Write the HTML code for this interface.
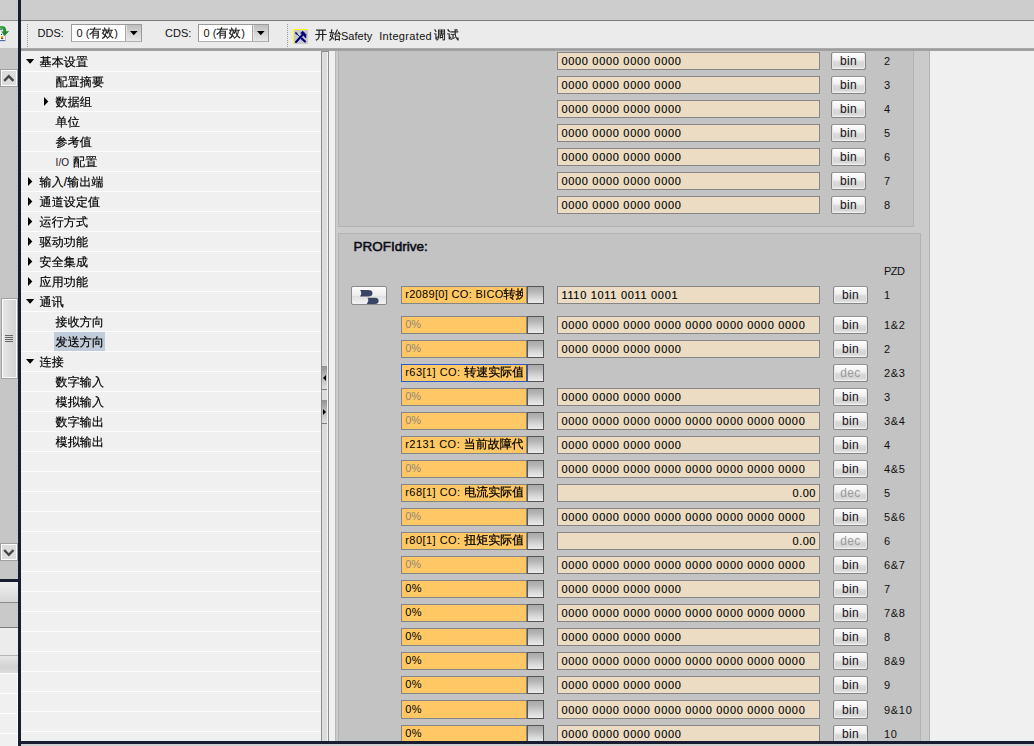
<!DOCTYPE html>
<html lang="zh-CN"><head><meta charset="utf-8"><title>PROFIdrive</title>
<style>
*{box-sizing:border-box;margin:0;padding:0}
html,body{width:1034px;height:746px;overflow:hidden;background:#c3c3c3}
body{position:relative;font-family:"Liberation Sans","WenQuanYi Zen Hei",sans-serif;font-size:11px;color:#101010}
.a{position:absolute}
.t{position:absolute;white-space:nowrap;line-height:20px;height:20px}
.cj{font-size:12px;-webkit-text-stroke:.2px #000}
/* tree */
#tree{left:21px;top:51px;width:300px;height:691px;background:#f0f0f0;
 background-image:repeating-linear-gradient(to bottom,#f0f0f0 0,#f0f0f0 19px,#fdfdfd 19px,#fdfdfd 20px);background-position:0 1px}
.ti{position:absolute;left:0;height:20px;line-height:20px;margin-top:1px;font-size:12px;white-space:nowrap;color:#000;-webkit-text-stroke:.2px #000;letter-spacing:.15px}
.ar{position:absolute;width:0;height:0}
.ar.r{border-left:4px solid #000;border-top:4.5px solid transparent;border-bottom:4.5px solid transparent}
.ar.d{border-top:4px solid #000;border-left:4px solid transparent;border-right:4px solid transparent}
/* fields */
.bf{position:absolute;left:557px;width:263px;height:18px;background:#ebdcc3;border:1px solid #868686;
 font-size:11px;line-height:16px;padding-left:3.4px;letter-spacing:.69px;white-space:nowrap;overflow:hidden;color:#000;-webkit-text-stroke:.12px #000}
.bf.r{text-align:right;padding-right:3px;letter-spacing:.5px}
.of{position:absolute;left:401px;width:126px;height:18px;background:#ffc864;border:1px solid #868686;
 font-size:11px;line-height:15px;padding-left:3.2px;white-space:nowrap;overflow:hidden;color:#000;letter-spacing:.32px}
.of i{display:block;font-style:normal;width:118.2px;overflow:hidden}
.of.g{color:#8f897a;letter-spacing:0}
.of.f{border-color:#2a5bd0}
.of .c{font-size:12px;letter-spacing:0;-webkit-text-stroke:.25px #000}
.sq{position:absolute;left:527px;width:17px;height:18px;border:1px solid #555;background:linear-gradient(to bottom,#aaa 0,#b4b4b4 25%,#d8d8d8 70%,#ececec 100%)}
.bb{position:absolute;width:35px;height:18px;border:1px solid #868686;border-top-color:#939393;border-radius:2.5px;
 background:linear-gradient(to bottom,#fdfdfd 0,#f2f2f2 40%,#e6e6e6 50%,#d9d9d9 56%,#d6d6d6 80%,#e8e8e8 100%);box-shadow:inset 0 1px 0 #fff,inset 0 -1px 0 #f0f0f0,inset 1px 0 0 #e6e6e6,inset -1px 0 0 #e6e6e6;
 font-size:12px;line-height:17px;text-align:center;color:#141018;letter-spacing:.35px}
.bb.dis{color:#9a9a9a}
.lb{position:absolute;left:884px;font-size:11px;line-height:18px;height:18px;white-space:nowrap;letter-spacing:.7px;color:#101010}
</style></head>
<body>
<div class="a" style="left:0;top:0;width:1034px;height:20px;background:#cdcdcd"></div>
<div class="a" style="left:0;top:20px;width:1034px;height:1px;background:#7d7d7d"></div>
<div class="a" style="left:0;top:21px;width:1034px;height:27px;background:#ebebeb"></div>
<div class="a" style="left:0;top:48px;width:1034px;height:3px;background:linear-gradient(to bottom,#b0b0b0,#9c9c9c 50%,#a4a4a4)"></div>
<div class="a" style="left:0;top:20px;width:18px;height:1px;background:#8c8c8c"></div>
<div class="a" style="left:0;top:21px;width:18px;height:27px;background:#e9e9e9"></div>
<div class="a" style="left:0;top:48px;width:18px;height:532px;background:#c6c6c6"></div>
<div class="a" style="left:329px;top:51px;width:6px;height:691px;background:#f0f0f0"></div>
<div class="a" style="left:335px;top:51px;width:595px;height:691px;background:#cbcbcb"></div>
<div class="a" style="left:930px;top:51px;width:104px;height:691px;background:#f0f0f0"></div>
<div class="a" style="left:929px;top:51px;width:1px;height:691px;background:#b2b2b2"></div>
<div class="a" style="left:338px;top:40px;width:576px;height:187px;background:#c3c3c3;border:1px solid #b2b2b2;clip-path:inset(11px 0 0 0)"></div>
<div class="a" style="left:338px;top:233px;width:583px;height:520px;background:#c3c3c3;border:1px solid #b2b2b2"></div>
<div class="a" id="tree">
<svg class="a" style="left:5px;top:7.5px" width="9" height="5" viewBox="0 0 9 5"><path d="M0 0L8.2 0L4.1 4.7Z" fill="#000"/></svg>
<span class="ti" style="left:18.5px;top:0px">基本设置</span>
<span class="ti" style="left:34.5px;top:20px">配置摘要</span>
<svg class="a" style="left:23px;top:46px" width="5" height="9" viewBox="0 0 5 9"><path d="M0 0L4.3 4.5L0 9Z" fill="#000"/></svg>
<span class="ti" style="left:34.5px;top:40px">数据组</span>
<span class="ti" style="left:34.5px;top:60px">单位</span>
<span class="ti" style="left:34.5px;top:80px">参考值</span>
<span class="ti" style="left:34.5px;top:100px"><span style="font-size:10px;-webkit-text-stroke:0;letter-spacing:.1px;margin-right:1px;color:#15101c">I/O </span>配置</span>
<svg class="a" style="left:7px;top:126px" width="5" height="9" viewBox="0 0 5 9"><path d="M0 0L4.3 4.5L0 9Z" fill="#000"/></svg>
<span class="ti" style="left:18.5px;top:120px">输入/输出端</span>
<svg class="a" style="left:7px;top:146px" width="5" height="9" viewBox="0 0 5 9"><path d="M0 0L4.3 4.5L0 9Z" fill="#000"/></svg>
<span class="ti" style="left:18.5px;top:140px">通道设定值</span>
<svg class="a" style="left:7px;top:166px" width="5" height="9" viewBox="0 0 5 9"><path d="M0 0L4.3 4.5L0 9Z" fill="#000"/></svg>
<span class="ti" style="left:18.5px;top:160px">运行方式</span>
<svg class="a" style="left:7px;top:186px" width="5" height="9" viewBox="0 0 5 9"><path d="M0 0L4.3 4.5L0 9Z" fill="#000"/></svg>
<span class="ti" style="left:18.5px;top:180px">驱动功能</span>
<svg class="a" style="left:7px;top:206px" width="5" height="9" viewBox="0 0 5 9"><path d="M0 0L4.3 4.5L0 9Z" fill="#000"/></svg>
<span class="ti" style="left:18.5px;top:200px">安全集成</span>
<svg class="a" style="left:7px;top:226px" width="5" height="9" viewBox="0 0 5 9"><path d="M0 0L4.3 4.5L0 9Z" fill="#000"/></svg>
<span class="ti" style="left:18.5px;top:220px">应用功能</span>
<svg class="a" style="left:5px;top:247.5px" width="9" height="5" viewBox="0 0 9 5"><path d="M0 0L8.2 0L4.1 4.7Z" fill="#000"/></svg>
<span class="ti" style="left:18.5px;top:240px">通讯</span>
<span class="ti" style="left:34.5px;top:260px">接收方向</span>
<span class="a" style="left:33.0px;top:281px;width:51px;height:19px;background:#c0ccd9"></span>
<span class="ti" style="left:34.5px;top:280px">发送方向</span>
<svg class="a" style="left:5px;top:307.5px" width="9" height="5" viewBox="0 0 9 5"><path d="M0 0L8.2 0L4.1 4.7Z" fill="#000"/></svg>
<span class="ti" style="left:18.5px;top:300px">连接</span>
<span class="ti" style="left:34.5px;top:320px">数字输入</span>
<span class="ti" style="left:34.5px;top:340px">模拟输入</span>
<span class="ti" style="left:34.5px;top:360px">数字输出</span>
<span class="ti" style="left:34.5px;top:380px">模拟输出</span>
</div>
<div class="a" style="left:321px;top:51px;width:1px;height:691px;background:#8e8e8e"></div>
<div class="a" style="left:322px;top:51px;width:5px;height:691px;background:#dcdcdc"></div>
<div class="a" style="left:327px;top:51px;width:1px;height:691px;background:#f4f4f4"></div>
<div class="a" style="left:328px;top:51px;width:1px;height:691px;background:#8e8e8e"></div>
<div class="a" style="left:321px;top:51px;width:8px;height:1px;background:#8e8e8e"></div>
<div class="a" style="left:335px;top:51px;width:1px;height:691px;background:#b6b6b6"></div>
<div class="a" style="left:322px;top:366px;width:5px;height:24px;background:linear-gradient(to bottom,#909090,#b8b8b8 40%,#e0e0e0);border-bottom:1px solid #7a7a7a"></div>
<span class="ar" style="left:322.5px;top:375px;border-right:3.5px solid #000;border-top:3px solid transparent;border-bottom:3px solid transparent"></span>
<div class="a" style="left:322px;top:400px;width:5px;height:24px;background:linear-gradient(to bottom,#909090,#b8b8b8 40%,#e0e0e0);border-bottom:1px solid #7a7a7a"></div>
<span class="ar" style="left:323px;top:409px;border-left:3.5px solid #000;border-top:3px solid transparent;border-bottom:3px solid transparent"></span>
<div class="a" style="left:18px;top:0;width:3px;height:746px;background:#181d32"></div>
<div class="a" style="left:0;top:579px;width:18px;height:3px;background:#181d32"></div>
<div class="a" style="left:0;top:582px;width:18px;height:20px;background:linear-gradient(to bottom,#eeeeee,#e4e4e4 50%,#d6d6d6)"></div>
<div class="a" style="left:0;top:602px;width:18px;height:1px;background:#8c8c8c"></div>
<div class="a" style="left:0;top:603px;width:18px;height:24px;background:#c9c9c9"></div>
<div class="a" style="left:0;top:627px;width:18px;height:1px;background:#7c7c7c"></div>
<div class="a" style="left:0;top:628px;width:18px;height:27px;background:#ececec"></div>
<div class="a" style="left:0;top:655px;width:18px;height:1px;background:#b4b4b4"></div>
<div class="a" style="left:0;top:656px;width:18px;height:17px;background:linear-gradient(to bottom,#e6e6e6,#d2d2d2 65%,#dcdcdc)"></div>
<div class="a" style="left:0;top:673px;width:18px;height:73px;background:#f0f0f0;background-image:repeating-linear-gradient(to bottom,#fdfdfd 0,#fdfdfd 1px,#f0f0f0 1px,#f0f0f0 20px)"></div>
<div class="a" style="left:17px;top:673px;width:1px;height:73px;background:#fbfbfb"></div>
<div class="a" style="left:18px;top:741px;width:1016px;height:3px;background:#181d32"></div>
<div class="a" style="left:0;top:69px;width:18px;height:18px;background:#dcdcdc;border:1px solid #a0a0a0;box-shadow:inset 0 0 0 1px #fcfcfc"><svg width="16" height="16" viewBox="0 0 16 16" style="position:absolute;left:0;top:0"><polyline points="3.2,10.2 7.8,5.5 12.4,10.2" fill="none" stroke="#464646" stroke-width="2.4" transform="translate(0,.6)"/></svg></div>
<div class="a" style="left:0;top:543px;width:18px;height:18px;background:#dcdcdc;border:1px solid #a0a0a0;box-shadow:inset 0 0 0 1px #fcfcfc"><svg width="16" height="16" viewBox="0 0 16 16" style="position:absolute;left:0;top:0"><polyline points="3.2,5.4 7.85,10.2 12.5,5.4" fill="none" stroke="#464646" stroke-width="2.4" transform="translate(0,.6)"/></svg></div>
<div class="a" style="left:1px;top:298px;width:17px;height:81px;background:linear-gradient(to right,#e8e8e8,#dcdcdc 50%,#d2d2d2);border:1px solid #a2a2a2;box-shadow:inset 0 0 0 1px #fbfbfb"></div>
<div class="a" style="left:5px;top:335px;width:8px;height:1px;background:#666"></div>
<div class="a" style="left:5px;top:337px;width:8px;height:1px;background:#666"></div>
<div class="a" style="left:5px;top:339px;width:8px;height:1px;background:#666"></div>
<div class="a" style="left:5px;top:341px;width:8px;height:1px;background:#666"></div>
<svg class="a" style="left:0;top:25px" width="11" height="18" viewBox="0 0 11 18"><defs><linearGradient id="gg" x1="0" y1="0" x2="1" y2="1"><stop offset="0" stop-color="#3cb43c"/><stop offset="1" stop-color="#0e6a2e"/></linearGradient><linearGradient id="og" x1="0" y1="0" x2="0" y2="1"><stop offset="0" stop-color="#ffc020"/><stop offset="1" stop-color="#ff6a00"/></linearGradient></defs><rect x="-1" y="7" width="6" height="9" fill="#fdfdff"/><rect x="-1" y="15.2" width="6.2" height=".9" fill="#1c4a8c"/><rect x="5" y="9" width=".6" height="7" fill="#9aa6c0"/><rect x="0" y="4" width="2" height=".8" fill="#2a5aa0"/><circle cx="1.5" cy="9.4" r=".6" fill="#1a2050"/><rect x="1" y="11" width="2.2" height="2.4" fill="url(#og)"/><rect x="1" y="13.3" width="2.2" height=".8" fill="#101020"/><path d="M0 1 Q6.2 .2 6.2 5.2 L6.2 6.2 L9.2 6.2 L4.3 11 L1.2 6.4 L3.2 6.4 Q3.4 3.6 0 3.4Z" fill="url(#gg)"/></svg>
<div class="a" style="left:27px;top:24px;width:1px;height:24px;background-image:repeating-linear-gradient(to bottom,#9a9a9a 0,#9a9a9a 1px,transparent 1px,transparent 2px)"></div>
<div class="a" style="left:287px;top:24px;width:1px;height:24px;background-image:repeating-linear-gradient(to bottom,#9a9a9a 0,#9a9a9a 1px,transparent 1px,transparent 2px)"></div>
<span class="t" style="left:37.5px;top:23px">DDS:</span>
<span class="t" style="left:165px;top:23px">CDS:</span>
<div class="a" style="left:71px;top:24px;width:71px;height:18px;border:1px solid #9a9a9a;border-bottom-color:#b0b0b0;background:#fff"></div><span class="t" style="left:76.5px;top:23px">0 (<span class="cj" style="letter-spacing:.4px">有效</span>)</span><div class="a" style="left:125px;top:25px;width:16px;height:16px;border-left:1px solid #a8a8a8;box-shadow:inset 1px 0 0 #e4e4e4;background:linear-gradient(to bottom,#bebebe,#d2d2d2 45%,#e8e8e8)"></div><svg class="a" style="left:129.7px;top:31px" width="8" height="5" viewBox="0 0 8 5"><path d="M0 0L7.6 0L3.8 4.2Z" fill="#000"/></svg>
<div class="a" style="left:198px;top:24px;width:71px;height:18px;border:1px solid #9a9a9a;border-bottom-color:#b0b0b0;background:#fff"></div><span class="t" style="left:203.5px;top:23px">0 (<span class="cj" style="letter-spacing:.4px">有效</span>)</span><div class="a" style="left:252px;top:25px;width:16px;height:16px;border-left:1px solid #a8a8a8;box-shadow:inset 1px 0 0 #e4e4e4;background:linear-gradient(to bottom,#bebebe,#d2d2d2 45%,#e8e8e8)"></div><svg class="a" style="left:256.7px;top:31px" width="8" height="5" viewBox="0 0 8 5"><path d="M0 0L7.6 0L3.8 4.2Z" fill="#000"/></svg>
<svg class="a" style="left:293px;top:29px" width="15" height="15" viewBox="0 0 15 15"><rect width="15" height="15" fill="#c9c9c9"/><rect width="15" height="1" fill="#ffff00"/><rect width="1" height="15" fill="#ffff00"/><g stroke="#00007a" fill="none" stroke-linecap="round"><path d="M3 13 L9.6 5.8" stroke-width="2"/><path d="M8 3.8 L9.8 2.3 L12.9 5.5 L12.7 8.8 L11.3 7.6 L11 6.2 L9.6 5.6Z" fill="#00007a" stroke-width=".9" stroke-linejoin="round"/><path d="M2.9 4 L3.6 4.7" stroke-width="1.7"/><path d="M3.6 4.7 L6.4 7.4" stroke-width=".9"/><path d="M8.6 9.4 L12 12.5" stroke-width="2.1"/></g></svg>
<span class="t cj" style="left:315px;top:25px;letter-spacing:2px">开始</span>
<span class="t" style="left:341px;top:26px">Safety</span>
<span class="t" style="left:379.2px;top:26px;letter-spacing:.33px">Integrated</span>
<span class="t cj" style="left:434px;top:25px;letter-spacing:1px">调试</span>
<div class="bf" style="top:52px">0000 0000 0000 0000</div>
<div class="bb" style="left:831px;top:52px">bin</div>
<div class="lb" style="top:52px">2</div>
<div class="bf" style="top:76px">0000 0000 0000 0000</div>
<div class="bb" style="left:831px;top:76px">bin</div>
<div class="lb" style="top:76px">3</div>
<div class="bf" style="top:100px">0000 0000 0000 0000</div>
<div class="bb" style="left:831px;top:100px">bin</div>
<div class="lb" style="top:100px">4</div>
<div class="bf" style="top:124px">0000 0000 0000 0000</div>
<div class="bb" style="left:831px;top:124px">bin</div>
<div class="lb" style="top:124px">5</div>
<div class="bf" style="top:148px">0000 0000 0000 0000</div>
<div class="bb" style="left:831px;top:148px">bin</div>
<div class="lb" style="top:148px">6</div>
<div class="bf" style="top:172px">0000 0000 0000 0000</div>
<div class="bb" style="left:831px;top:172px">bin</div>
<div class="lb" style="top:172px">7</div>
<div class="bf" style="top:196px">0000 0000 0000 0000</div>
<div class="bb" style="left:831px;top:196px">bin</div>
<div class="lb" style="top:196px">8</div>
<span class="t" style="left:353.5px;top:237px;font-size:13.5px;color:#0c0c16;-webkit-text-stroke:.55px #0c0c16">PROFIdrive:</span>
<div class="lb" style="top:262px;letter-spacing:-.5px">PZD</div>
<div class="a" style="left:351px;top:286px;width:36px;height:19px;border:1px solid #8a8a8a;border-radius:2px;background:linear-gradient(to bottom,#fdfdfd,#ececec 50%,#e0e0e0 55%,#f4f4f4)"></div>
<svg class="a" style="left:358px;top:288px" width="24" height="17" viewBox="0 0 24 17"><path d="M2 2 L10 2 Q14.5 2 14.5 5.2 Q14.5 8.4 10 8.4 L2 8.4 Q4.5 5.2 2 2Z" fill="#3a4466"/><path d="M9.5 9.8 L17 9.8 Q20.6 9.8 20.6 12.8 Q20.6 16 17 16 L8.6 16 Q11.5 12.8 9.5 9.8Z" fill="#3a4466"/></svg>
<div class="of" style="top:286px;height:18px;line-height:15px"><i>r2089[0] CO: BICO<span class="c">转换</span></i></div>
<div class="sq" style="top:286px;height:18px"></div>
<div class="bf" style="top:286px;height:18px;line-height:16px">1110 1011 0011 0001</div>
<div class="bb" style="left:833px;top:286px;height:18px;line-height:17px">bin</div>
<div class="lb" style="top:286px;height:18px;line-height:18px">1</div>
<div class="of g" style="top:316px;height:18px;line-height:15px"><i>0%</i></div>
<div class="sq" style="top:316px;height:18px"></div>
<div class="bf" style="top:316px;height:18px;line-height:16px">0000 0000 0000 0000 0000 0000 0000 0000</div>
<div class="bb" style="left:833px;top:316px;height:18px;line-height:17px">bin</div>
<div class="lb" style="top:316px;height:18px;line-height:18px">1&amp;2</div>
<div class="of g" style="top:340px;height:18px;line-height:15px"><i>0%</i></div>
<div class="sq" style="top:340px;height:18px"></div>
<div class="bf" style="top:340px;height:18px;line-height:16px">0000 0000 0000 0000</div>
<div class="bb" style="left:833px;top:340px;height:18px;line-height:17px">bin</div>
<div class="lb" style="top:340px;height:18px;line-height:18px">2</div>
<div class="of f" style="top:364px;height:18px;line-height:15px"><i><span style="letter-spacing:.47px">r63[1] CO: </span><span class="c">转速实际值</span></i></div>
<div class="sq" style="top:364px;height:18px"></div>
<div class="bb dis" style="left:833px;top:364px;height:18px;line-height:17px">dec</div>
<div class="lb" style="top:364px;height:18px;line-height:18px">2&amp;3</div>
<div class="of g" style="top:388px;height:18px;line-height:15px"><i>0%</i></div>
<div class="sq" style="top:388px;height:18px"></div>
<div class="bf" style="top:388px;height:18px;line-height:16px">0000 0000 0000 0000</div>
<div class="bb" style="left:833px;top:388px;height:18px;line-height:17px">bin</div>
<div class="lb" style="top:388px;height:18px;line-height:18px">3</div>
<div class="of g" style="top:412px;height:18px;line-height:15px"><i>0%</i></div>
<div class="sq" style="top:412px;height:18px"></div>
<div class="bf" style="top:412px;height:18px;line-height:16px">0000 0000 0000 0000 0000 0000 0000 0000</div>
<div class="bb" style="left:833px;top:412px;height:18px;line-height:17px">bin</div>
<div class="lb" style="top:412px;height:18px;line-height:18px">3&amp;4</div>
<div class="of" style="top:436px;height:18px;line-height:15px"><i><span style="letter-spacing:.47px">r2131 CO: </span><span class="c">当前故障代</span></i></div>
<div class="sq" style="top:436px;height:18px"></div>
<div class="bf" style="top:436px;height:18px;line-height:16px">0000 0000 0000 0000</div>
<div class="bb" style="left:833px;top:436px;height:18px;line-height:17px">bin</div>
<div class="lb" style="top:436px;height:18px;line-height:18px">4</div>
<div class="of g" style="top:460px;height:18px;line-height:15px"><i>0%</i></div>
<div class="sq" style="top:460px;height:18px"></div>
<div class="bf" style="top:460px;height:18px;line-height:16px">0000 0000 0000 0000 0000 0000 0000 0000</div>
<div class="bb" style="left:833px;top:460px;height:18px;line-height:17px">bin</div>
<div class="lb" style="top:460px;height:18px;line-height:18px">4&amp;5</div>
<div class="of" style="top:484px;height:18px;line-height:15px"><i><span style="letter-spacing:.47px">r68[1] CO: </span><span class="c">电流实际值</span></i></div>
<div class="sq" style="top:484px;height:18px"></div>
<div class="bf r" style="top:484px;height:18px;line-height:16px">0.00</div>
<div class="bb dis" style="left:833px;top:484px;height:18px;line-height:17px">dec</div>
<div class="lb" style="top:484px;height:18px;line-height:18px">5</div>
<div class="of g" style="top:508px;height:18px;line-height:15px"><i>0%</i></div>
<div class="sq" style="top:508px;height:18px"></div>
<div class="bf" style="top:508px;height:18px;line-height:16px">0000 0000 0000 0000 0000 0000 0000 0000</div>
<div class="bb" style="left:833px;top:508px;height:18px;line-height:17px">bin</div>
<div class="lb" style="top:508px;height:18px;line-height:18px">5&amp;6</div>
<div class="of" style="top:532px;height:18px;line-height:15px"><i><span style="letter-spacing:.47px">r80[1] CO: </span><span class="c">扭矩实际值</span></i></div>
<div class="sq" style="top:532px;height:18px"></div>
<div class="bf r" style="top:532px;height:18px;line-height:16px">0.00</div>
<div class="bb dis" style="left:833px;top:532px;height:18px;line-height:17px">dec</div>
<div class="lb" style="top:532px;height:18px;line-height:18px">6</div>
<div class="of g" style="top:556px;height:18px;line-height:15px"><i>0%</i></div>
<div class="sq" style="top:556px;height:18px"></div>
<div class="bf" style="top:556px;height:18px;line-height:16px">0000 0000 0000 0000 0000 0000 0000 0000</div>
<div class="bb" style="left:833px;top:556px;height:18px;line-height:17px">bin</div>
<div class="lb" style="top:556px;height:18px;line-height:18px">6&amp;7</div>
<div class="of" style="top:580px;height:18px;line-height:15px"><i>0%</i></div>
<div class="sq" style="top:580px;height:18px"></div>
<div class="bf" style="top:580px;height:18px;line-height:16px">0000 0000 0000 0000</div>
<div class="bb" style="left:833px;top:580px;height:18px;line-height:17px">bin</div>
<div class="lb" style="top:580px;height:18px;line-height:18px">7</div>
<div class="of" style="top:604px;height:18px;line-height:15px"><i>0%</i></div>
<div class="sq" style="top:604px;height:18px"></div>
<div class="bf" style="top:604px;height:18px;line-height:16px">0000 0000 0000 0000 0000 0000 0000 0000</div>
<div class="bb" style="left:833px;top:604px;height:18px;line-height:17px">bin</div>
<div class="lb" style="top:604px;height:18px;line-height:18px">7&amp;8</div>
<div class="of" style="top:628px;height:18px;line-height:15px"><i>0%</i></div>
<div class="sq" style="top:628px;height:18px"></div>
<div class="bf" style="top:628px;height:18px;line-height:16px">0000 0000 0000 0000</div>
<div class="bb" style="left:833px;top:628px;height:18px;line-height:17px">bin</div>
<div class="lb" style="top:628px;height:18px;line-height:18px">8</div>
<div class="of" style="top:652px;height:18px;line-height:15px"><i>0%</i></div>
<div class="sq" style="top:652px;height:18px"></div>
<div class="bf" style="top:652px;height:18px;line-height:16px">0000 0000 0000 0000 0000 0000 0000 0000</div>
<div class="bb" style="left:833px;top:652px;height:18px;line-height:17px">bin</div>
<div class="lb" style="top:652px;height:18px;line-height:18px">8&amp;9</div>
<div class="of" style="top:676px;height:18px;line-height:15px"><i>0%</i></div>
<div class="sq" style="top:676px;height:18px"></div>
<div class="bf" style="top:676px;height:18px;line-height:16px">0000 0000 0000 0000</div>
<div class="bb" style="left:833px;top:676px;height:18px;line-height:17px">bin</div>
<div class="lb" style="top:676px;height:18px;line-height:18px">9</div>
<div class="of" style="top:700px;height:19px;line-height:16px"><i>0%</i></div>
<div class="sq" style="top:700px;height:19px"></div>
<div class="bf" style="top:700px;height:19px;line-height:18px">0000 0000 0000 0000 0000 0000 0000 0000</div>
<div class="bb" style="left:833px;top:700px;height:19px;line-height:18px">bin</div>
<div class="lb" style="top:701px;height:19px;line-height:19px">9&amp;10</div>
<div class="of" style="top:725px;height:18px;line-height:15px"><i>0%</i></div>
<div class="sq" style="top:725px;height:18px"></div>
<div class="bf" style="top:725px;height:18px;line-height:16px">0000 0000 0000 0000</div>
<div class="bb" style="left:833px;top:725px;height:18px;line-height:17px">bin</div>
<div class="lb" style="top:725px;height:18px;line-height:18px">10</div>
<div class="a" style="left:21px;top:741px;width:1013px;height:3px;background:#181d32"></div>
<div class="a" style="left:21px;top:744px;width:1013px;height:2px;background:#cfcfcf"></div>
</body></html>
